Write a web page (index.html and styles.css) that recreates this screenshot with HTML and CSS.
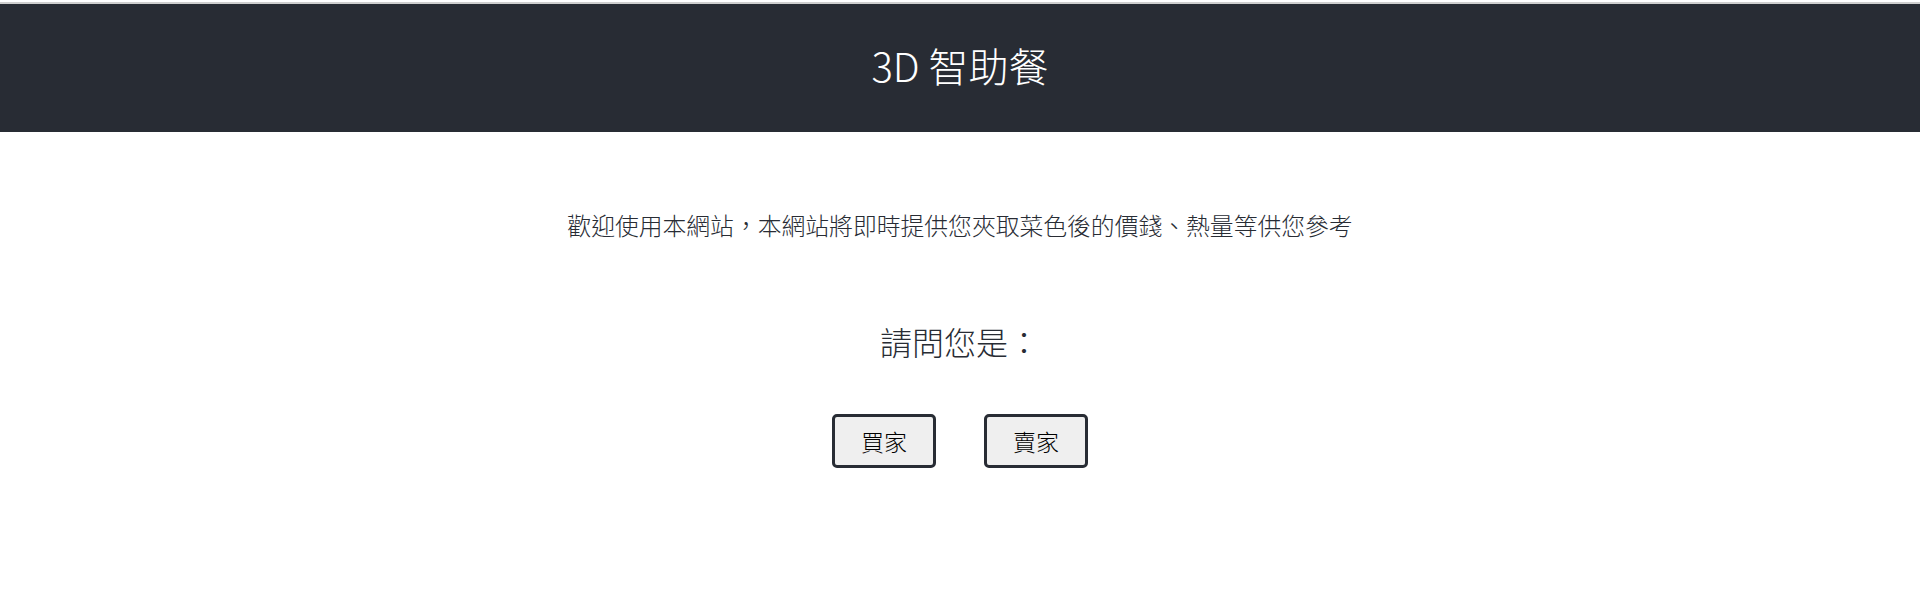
FILE: index.html
```html
<!DOCTYPE html>
<html lang="zh-Hant">
<head>
<meta charset="utf-8">
<title>3D 智助餐</title>
<link rel="stylesheet" href="styles.css">
</head>
<body>
<div class="topline"></div>
<header class="app-header">
  <h1 class="title">3D 智助餐</h1>
</header>
<main class="content">
  <p class="intro">歡迎使用本網站，本網站將即時提供您夾取菜色後的價錢、熱量等供您參考</p>
  <h2 class="question">請問您是：</h2>
  <div class="choices">
    <button class="choice" type="button">買家</button>
    <button class="choice" type="button">賣家</button>
  </div>
</main>
</body>
</html>
```

FILE: styles.css
```css
html, body {
  margin: 0;
  padding: 0;
  background: #ffffff;
}

body {
  padding-top: 2px;
  font-family: "Noto Sans CJK TC", "Noto Sans", sans-serif;
  color: #282c34;
}

.topline {
  height: 2px;
  background: #cfcfcf;
}

.app-header {
  height: 128px;
  background: #282c34;
  display: flex;
  align-items: center;
  justify-content: center;
}

.title {
  margin: 0 0 6px 0;
  font-weight: 300;
  font-size: 40px;
  line-height: 46px;
  color: #ffffff;
}

.content {
  display: flex;
  flex-direction: column;
  align-items: center;
  padding-top: 77px;
}

.intro {
  margin: 0;
  font-weight: 300;
  font-size: 23.8px;
  line-height: 32px;
  color: #282c34;
}

.question {
  margin: 80px 0 0 0;
  font-weight: 300;
  font-size: 32px;
  line-height: 40px;
  color: #282c34;
}

.choices {
  display: flex;
  gap: 48px;
  margin-top: 53px;
}

.choice {
  font-family: "Noto Sans CJK TC", sans-serif;
  font-weight: 300;
  font-size: 23px;
  line-height: 24px;
  padding: 12px 26px;
  border: 3px solid #282c34;
  border-radius: 5px;
  background: #efefef;
  color: #000000;
}
```
